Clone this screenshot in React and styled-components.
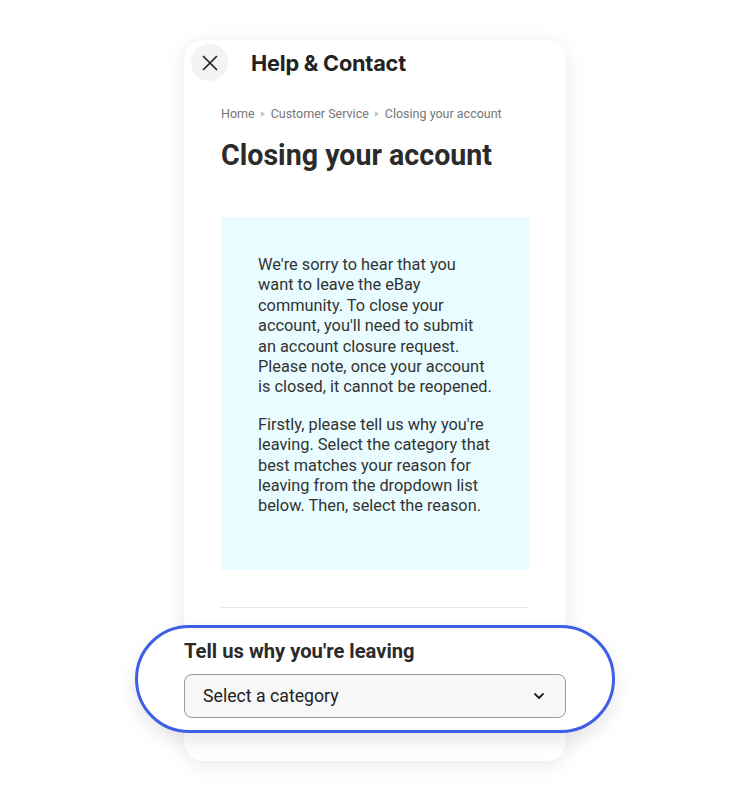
import React from 'react';
import styled, { createGlobalStyle } from 'styled-components';

const GlobalStyle = createGlobalStyle`
  body {
    margin: 0;
    background: #ffffff;
    font-family: Roboto, "Liberation Sans", sans-serif;
    color: #333;
  }
`;

const Page = styled.div`
  width: 750px;
  height: 800px;
  padding-top: 40px;
  box-sizing: border-box;
`;

const Card = styled.div`
  width: 382px;
  margin: 0 auto;
  background: #fff;
  border-radius: 20px;
  box-shadow: 0 4px 22px rgba(0, 0, 0, 0.09);
  padding: 4px 0 28px;
  box-sizing: border-box;
`;

const Header = styled.div`
  display: flex;
  align-items: center;
  gap: 23px;
  padding: 0 7px;
`;

const CloseButton = styled.button`
  width: 37px;
  height: 37px;
  border-radius: 50%;
  border: none;
  background: #f3f3f3;
  display: flex;
  align-items: center;
  justify-content: center;
  padding: 0;
`;

const HeaderTitle = styled.h2`
  margin: 0;
  font-family: Inter, "Liberation Sans", sans-serif;
  font-size: 21.7px;
  font-weight: 700;
  color: #222;
  letter-spacing: -0.2px;
`;

const Content = styled.div`
  padding: 0 37px;
`;

const Breadcrumb = styled.nav`
  display: flex;
  align-items: center;
  gap: 6px;
  margin-top: 25px;
  font-size: 12.5px;
  color: #767676;
  line-height: 16px;
`;

const Caret = styled.span`
  width: 0;
  height: 0;
  border-top: 3.5px solid transparent;
  border-bottom: 3.5px solid transparent;
  border-left: 4px solid #c4c4c4;
`;

const Title = styled.h1`
  margin: 16px 0 0;
  font-size: 28.6px;
  line-height: 34px;
  font-weight: 700;
  color: #2b2b2b;
`;

const InfoBox = styled.div`
  margin-top: 45px;
  background: #e9fcff;
  padding: 38px 36px 53px 37px;
  font-size: 16.35px;
  line-height: 20.4px;
  color: #333;
`;

const Para = styled.p`
  margin: 0;
  & + & {
    margin-top: 17px;
  }
`;

const Divider = styled.hr`
  margin: 37px 0 0;
  border: none;
  border-top: 1px solid #e8e8e8;
`;

const Highlight = styled.div`
  margin: 17px -49px 0;
  border: 3px solid #3c5fe6;
  border-radius: 56px;
  background: #fff;
  box-shadow: 0 8px 18px rgba(0, 0, 0, 0.1);
  padding: 12px 46px 12px;
`;

const Label = styled.div`
  font-size: 20.2px;
  font-weight: 700;
  color: #2b2b2b;
  line-height: 22px;
`;

const Select = styled.div`
  margin-top: 12px;
  height: 44px;
  box-sizing: border-box;
  border: 1px solid #9a9a9a;
  border-radius: 8px;
  background: #f7f7f7;
  display: flex;
  align-items: center;
  justify-content: space-between;
  padding: 0 20px 0 18px;
  font-size: 17.7px;
  color: #222;
`;

const XIcon = () => (
  <svg width="18" height="18" viewBox="0 0 18 18" fill="none">
    <path d="M2.5 2.5l13 13M15.5 2.5l-13 13" stroke="#222" strokeWidth="1.7" strokeLinecap="round" />
  </svg>
);

const Chevron = () => (
  <svg width="12" height="8" viewBox="0 0 12 8" fill="none">
    <path d="M2 2l4 4 4-4" stroke="#222" strokeWidth="1.8" strokeLinecap="round" strokeLinejoin="round" />
  </svg>
);

export default function App() {
  return (
    <>
      <GlobalStyle />
      <Page>
        <Card>
          <Header>
            <CloseButton aria-label="Close">
              <XIcon />
            </CloseButton>
            <HeaderTitle>Help &amp; Contact</HeaderTitle>
          </Header>
          <Content>
            <Breadcrumb>
              <span>Home</span>
              <Caret />
              <span>Customer Service</span>
              <Caret />
              <span>Closing your account</span>
            </Breadcrumb>
            <Title>Closing your account</Title>
            <InfoBox>
              <Para>
                We're sorry to hear that you want to leave the eBay community. To close your
                account, you'll need to submit an account closure request. Please note, once your
                account is closed, it cannot be reopened.
              </Para>
              <Para>
                Firstly, please tell us why you're leaving. Select the category that best matches
                your reason for leaving from the dropdown list below. Then, select the reason.
              </Para>
            </InfoBox>
            <Divider />
          </Content>
          <Highlight>
            <Label>Tell us why you're leaving</Label>
            <Select>
              <span>Select a category</span>
              <Chevron />
            </Select>
          </Highlight>
        </Card>
      </Page>
    </>
  );
}
